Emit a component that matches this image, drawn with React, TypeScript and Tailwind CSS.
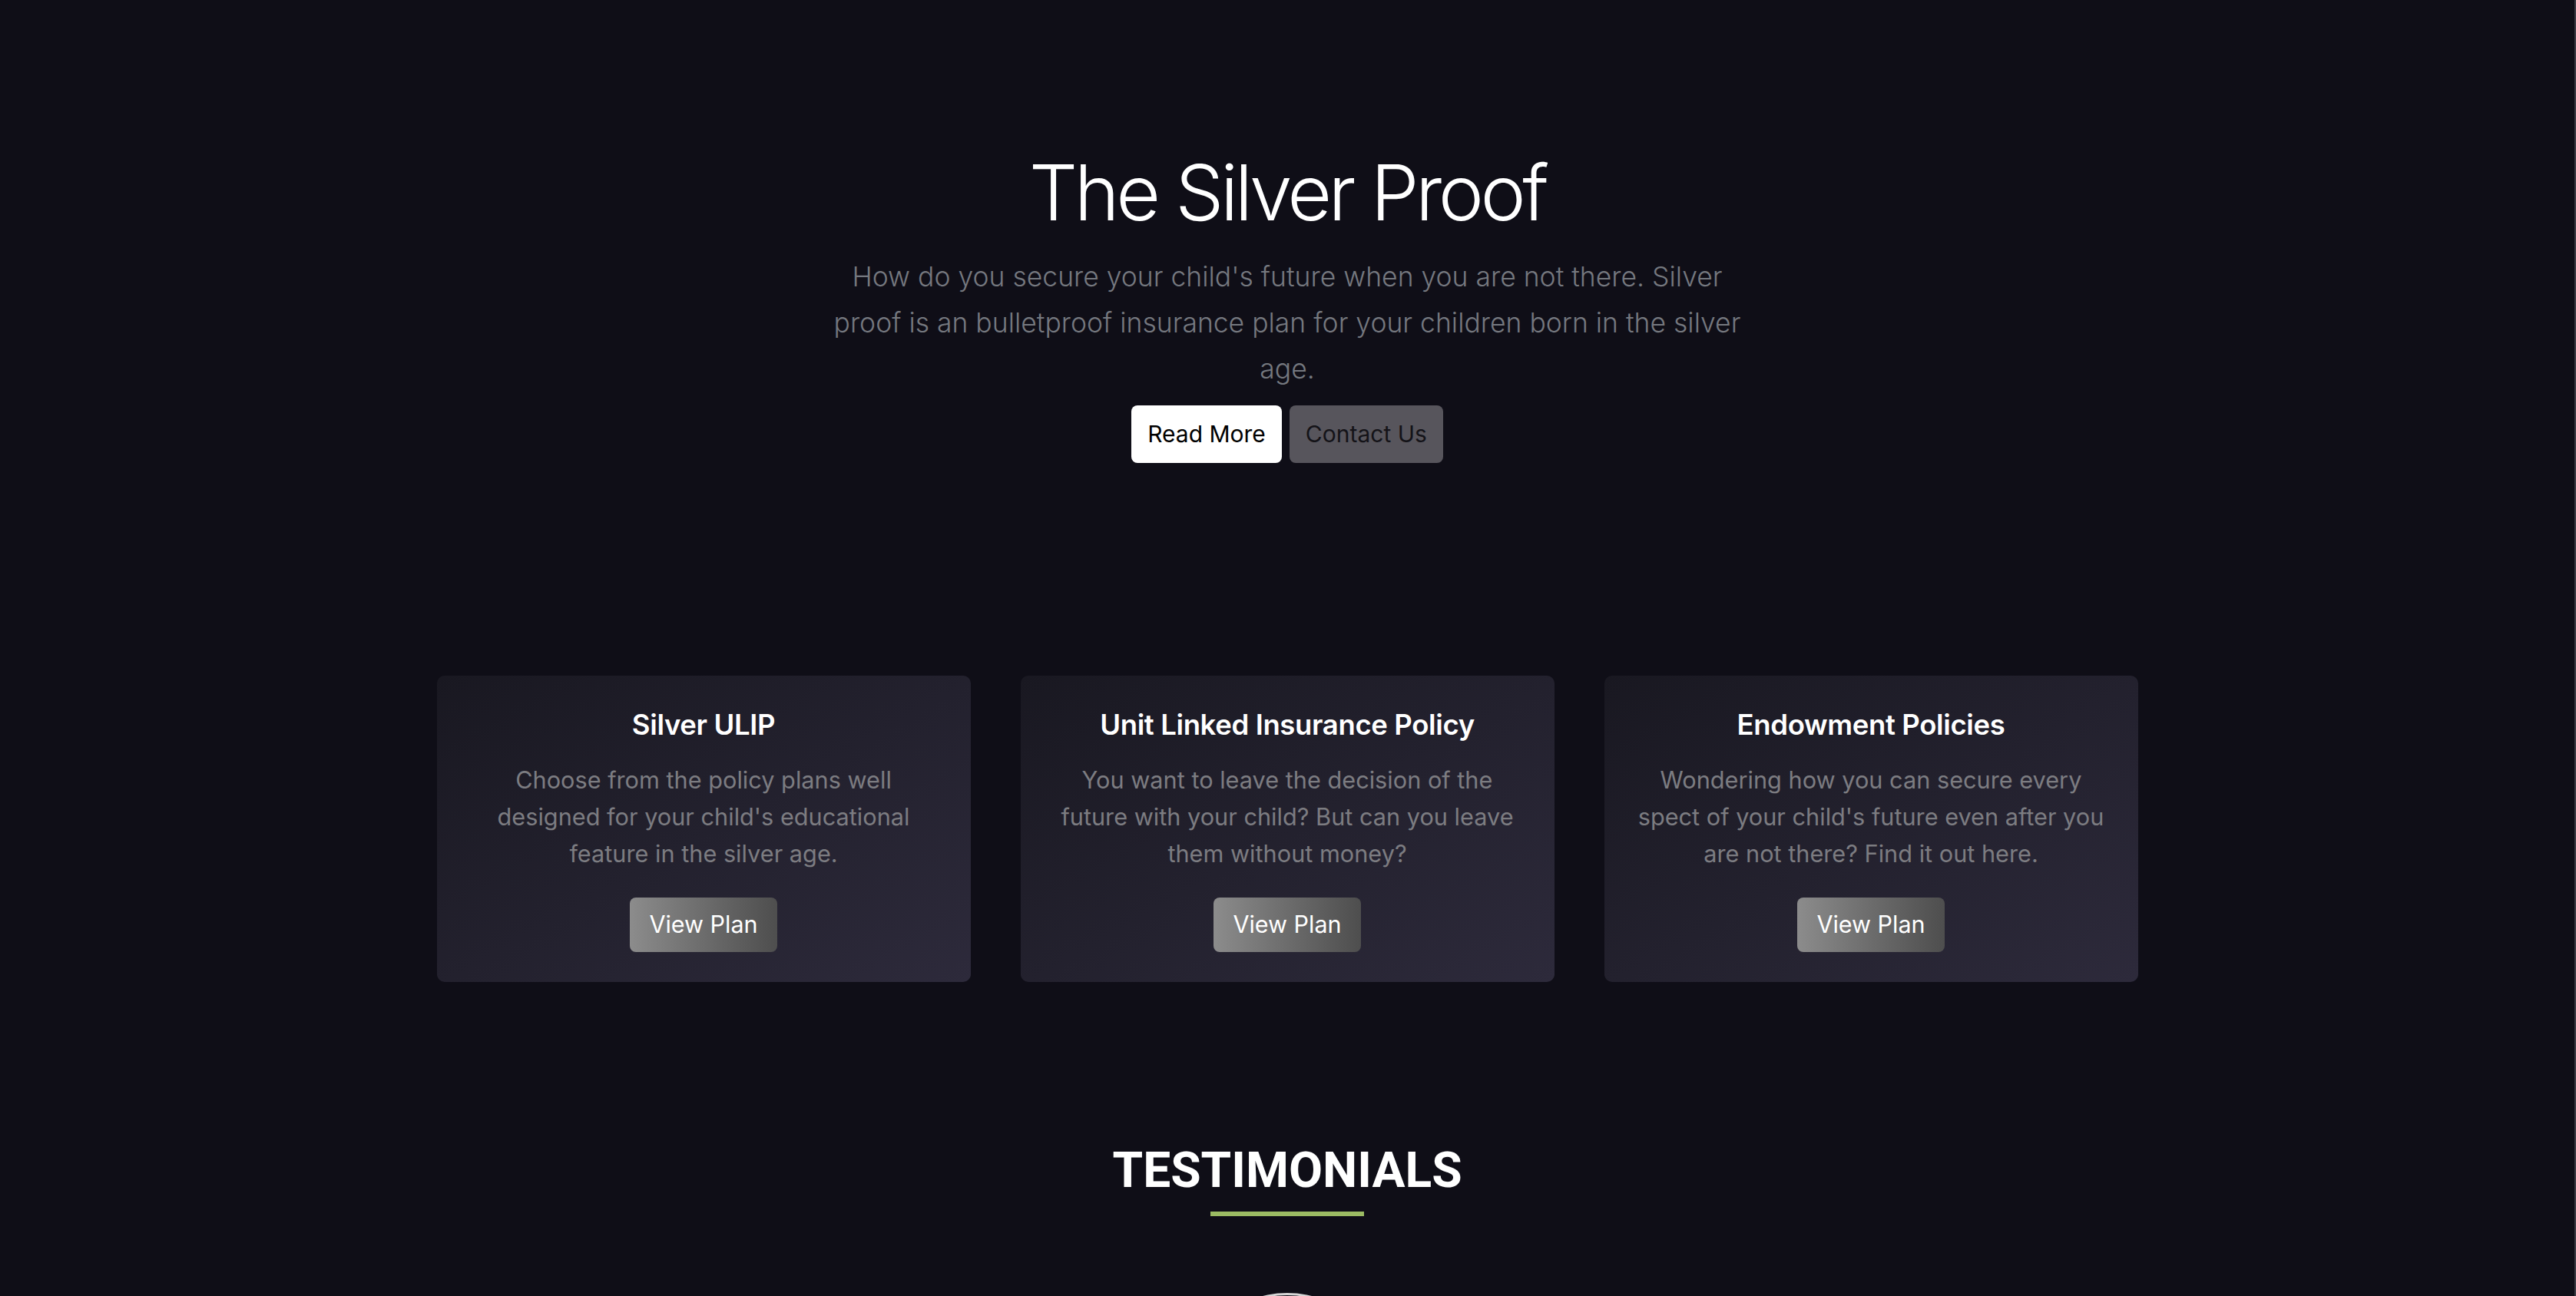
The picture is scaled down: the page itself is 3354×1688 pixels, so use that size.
import React from 'react';

const PLANS = [
  {
    title: 'Silver ULIP',
    text: "Choose from the policy plans well designed for your child's educational feature in the silver age.",
  },
  {
    title: 'Unit Linked Insurance Policy',
    text: 'You want to leave the decision of the future with your child? But can you leave them without money?',
  },
  {
    title: 'Endowment Policies',
    text: "Wondering how you can secure every spect of your child's future even after you are not there? Find it out here.",
  },
];

export default function App() {
  return (
    <div className="min-h-screen w-full bg-[#0f0e17] border-r-2 border-[#3c3b44] font-['Inter',sans-serif] overflow-hidden">
      {/* Hero */}
      <section className="flex flex-col items-center text-center pt-[191px]">
        <h1 className="text-[100px] leading-[1.2] font-light text-white tracking-[-0.045em]">The Silver Proof</h1>
        <p className="mt-[20px] w-[1212px] text-[35.5px] leading-[60px] font-light text-[#75787f]">
          How do you secure your child's future when you are not there. Silver proof is an bulletproof insurance plan for your children born in the silver age.
        </p>
        <div className="mt-[17px] flex gap-[10px]">
          <button className="h-[75px] px-[21px] rounded-[8px] bg-white text-black text-[30px]">Read More</button>
          <button className="h-[75px] px-[21px] rounded-[8px] bg-[#57555c] text-[#141318] text-[30px]">Contact Us</button>
        </div>
      </section>

      {/* Plans */}
      <section className="mt-[277px] flex justify-center">
        <div className="grid grid-cols-3 gap-[65px]">
          {PLANS.map(p => (
            <div key={p.title} className="w-[695px] h-[399px] rounded-[10px] bg-linear-to-br from-[#191821] to-[#2d2a3b] flex flex-col items-center text-center pt-[43px] px-[40px]">
              <h3 className="text-[36.5px] leading-[1.2] font-semibold text-white tracking-[-0.01em]">{p.title}</h3>
              <p className="mt-[25px] text-[30.7px] leading-[48px] text-[#7c7c81] max-w-[615px]">{p.text}</p>
              <button className="mt-[33px] h-[71px] px-[25px] rounded-[8px] bg-linear-to-r from-[#8c8c8c] to-[#4e4e4e] text-white text-[30.5px]">View Plan</button>
            </div>
          ))}
        </div>
      </section>

      {/* Testimonials */}
      <section className="mt-[208px] flex flex-col items-center">
        <h2 className="font-['Roboto',sans-serif] font-bold text-[64px] leading-[1.2] text-white">TESTIMONIALS</h2>
        <div className="mt-[14px] w-[200px] h-[6px] bg-[#9bbb63]" />
        <div className="mt-[100px] w-[272px] h-[272px] rounded-full border-[3px] border-[#d6d6d6]" />
      </section>
    </div>
  );
}
